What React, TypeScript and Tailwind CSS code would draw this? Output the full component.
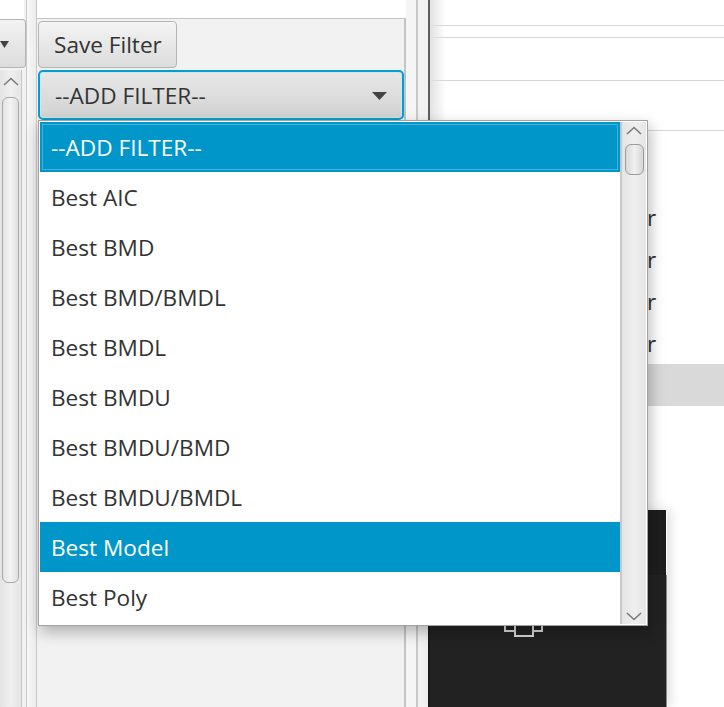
import React from "react";

const items = [
  "--ADD FILTER--",
  "Best AIC",
  "Best BMD",
  "Best BMD/BMDL",
  "Best BMDL",
  "Best BMDU",
  "Best BMDU/BMD",
  "Best BMDU/BMDL",
  "Best Model",
  "Best Poly",
];

function ChevronUp({ className }: { className?: string }) {
  return (
    <svg width="16" height="9" viewBox="0 0 16 9" className={className}>
      <polyline points="1,8 8,1.5 15,8" fill="none" stroke="#7a7a7a" strokeWidth="1.6" />
    </svg>
  );
}
function ChevronDown({ className }: { className?: string }) {
  return (
    <svg width="16" height="9" viewBox="0 0 16 9" className={className}>
      <polyline points="1,1 8,7.5 15,1" fill="none" stroke="#7a7a7a" strokeWidth="1.6" />
    </svg>
  );
}

export default function App() {
  return (
    <div className="relative flex h-[707px] w-[724px] overflow-hidden bg-[#f2f2f2] font-['Open_Sans',sans-serif] text-[22.6px] text-[#333]">
      {/* left pane */}
      <div className="flex w-[26px] flex-col">
        <div className="h-[19px] w-[24px] bg-white" />
        <div className="flex h-[49px] w-[26px] items-center rounded-r-[4px] border border-l-0 border-[#b5b5b5] bg-gradient-to-b from-[#f3f3f3] to-[#dcdcdc]">
          <svg width="9" height="7" viewBox="0 0 9 7" className="mt-[1px]">
            <polygon points="0,0 9,0 4.5,7" fill="#444" />
          </svg>
        </div>
        <div className="mt-[2px] flex flex-1 w-[22px] flex-col items-center border-r border-[#c6c6c6] bg-gradient-to-r from-[#e4e4e4] via-[#efefef] to-[#e6e6e6]">
          <ChevronUp className="mt-[7px]" />
          <div className="mt-[11px] h-[486px] w-[17px] rounded-[6px] border border-[#a9a9a9] bg-gradient-to-r from-[#e2e2e2] via-[#f4f4f4] to-[#e0e0e0]" />
        </div>
      </div>

      {/* divider */}
      <div className="w-[11px] border-r border-l border-[#c8c8c8] bg-gradient-to-r from-[#f7f7f7] to-[#ececec]" />

      {/* middle pane */}
      <div className="flex w-[369px] flex-col">
        <div className="h-[18px] bg-white" />
        <div className="flex flex-1 flex-col border-t border-r-2 border-[#c4c4c4] pl-[1px]">
          <div className="mt-[2px] flex h-[47px] w-[139px] items-center rounded-[4px] border border-[#b5b5b5] bg-gradient-to-b from-[#f4f4f4] to-[#dcdcdc] pl-[15px] pt-[1px]">
            Save Filter
          </div>
          <div className="mt-[2px] flex h-[50px] w-[366px] items-center justify-between rounded-[5px] border-2 border-[#039ed3] bg-gradient-to-b from-[#e8e8e8] to-[#d2d2d2] pl-[15px] pr-[15px] pt-[1px] shadow-[inset_0_0_0_1px_#cfe6ef]">
            <span>--ADD FILTER--</span>
            <svg width="15" height="8" viewBox="0 0 15 8">
              <polygon points="0,0 15,0 7.5,8" fill="#444" />
            </svg>
          </div>
        </div>
      </div>

      {/* second divider */}
      <div className="w-[12px] border-r-2 border-[#c8c8c8] bg-[#f5f5f5]" />
      <div className="w-[10px] bg-[#f2f2f2]" />

      {/* right pane */}
      <div className="relative flex flex-1 flex-col border-l-2 border-[#5e5e5e] bg-white">
        <div className="pointer-events-none absolute inset-y-0 left-0 w-[16px] bg-gradient-to-r from-[#e2e2e2] to-transparent" />
        <div className="h-[26px] border-b border-[#d6d6d6]" />
        <div className="h-[12px] border-b border-[#d6d6d6]" />
        <div className="h-[43px] border-b border-[#d6d6d6]" />
        <div className="h-[50px] border-b border-[#d6d6d6]" />
        <div className="h-[65px]" />
        {[0, 1, 2, 3].map((i) => (
          <div key={i} className="flex h-[42px] items-center pl-[217px] pt-[2px]">
            r
          </div>
        ))}
        <div className="h-[42px] bg-[#d9d9d9]" />
        <div className="h-[104px]" />
        <div className="relative -ml-[2px] flex flex-1">
          <div className="flex w-[239px] flex-col border-l-2 border-[#1a1a1a] bg-[#222] shadow-[4px_0_10px_rgba(0,0,0,0.12)]">
            <div className="h-[65px] border-r border-white bg-[#1e1e1e]" />
            <div className="flex-1 border-r border-[#8a8a8a]">
              <svg width="42" height="16" viewBox="0 0 42 16" className="ml-[72px] mt-[48px]">
                <polyline points="3,0 3,8 13,8" fill="none" stroke="#d8d8d8" strokeWidth="2" />
                <rect x="13" y="2" width="18" height="11" fill="none" stroke="#d8d8d8" strokeWidth="2" />
                <polyline points="40,0 40,8 31,8" fill="none" stroke="#d8d8d8" strokeWidth="2" />
              </svg>
            </div>
          </div>
        </div>
      </div>

      {/* popup list */}
      <div className="absolute left-[38px] top-[120px] flex h-[506px] w-[610px] border border-[#a2a2a2] bg-white p-px shadow-[2px_6px_14px_rgba(0,0,0,0.28)]">
        <div className="flex flex-1 flex-col">
          {items.map((t, i) => {
            const first = i === 0;
            const sel = t === "Best Model";
            return (
              <div
                key={t}
                className={
                  first
                    ? "flex h-[50px] shrink-0 items-center bg-[#0096c9] pl-[11px] pt-[1px] text-white shadow-[inset_0_0_0_2px_#0096c9,inset_0_0_0_3px_#47b1dd]"
                    : sel
                    ? "flex h-[50px] shrink-0 items-center bg-[#0096c9] pl-[11px] pt-[1px] text-white"
                    : "flex h-[50px] shrink-0 items-center pl-[11px] pt-[1px]"
                }
              >
                {t}
              </div>
            );
          })}
        </div>
        <div className="flex w-[26px] flex-col items-center border-l-2 border-[#c8c8c8] bg-gradient-to-r from-[#e4e4e4] via-[#efefef] to-[#e6e6e6]">
          <ChevronUp className="mt-[4px]" />
          <div className="mt-[9px] h-[31px] w-[19px] rounded-[6px] border border-[#9c9c9c] bg-gradient-to-r from-[#d8d8d8] via-[#f0f0f0] to-[#d6d6d6]" />
          <div className="flex-1" />
          <ChevronDown className="mb-[3px]" />
        </div>
      </div>
    </div>
  );
}
